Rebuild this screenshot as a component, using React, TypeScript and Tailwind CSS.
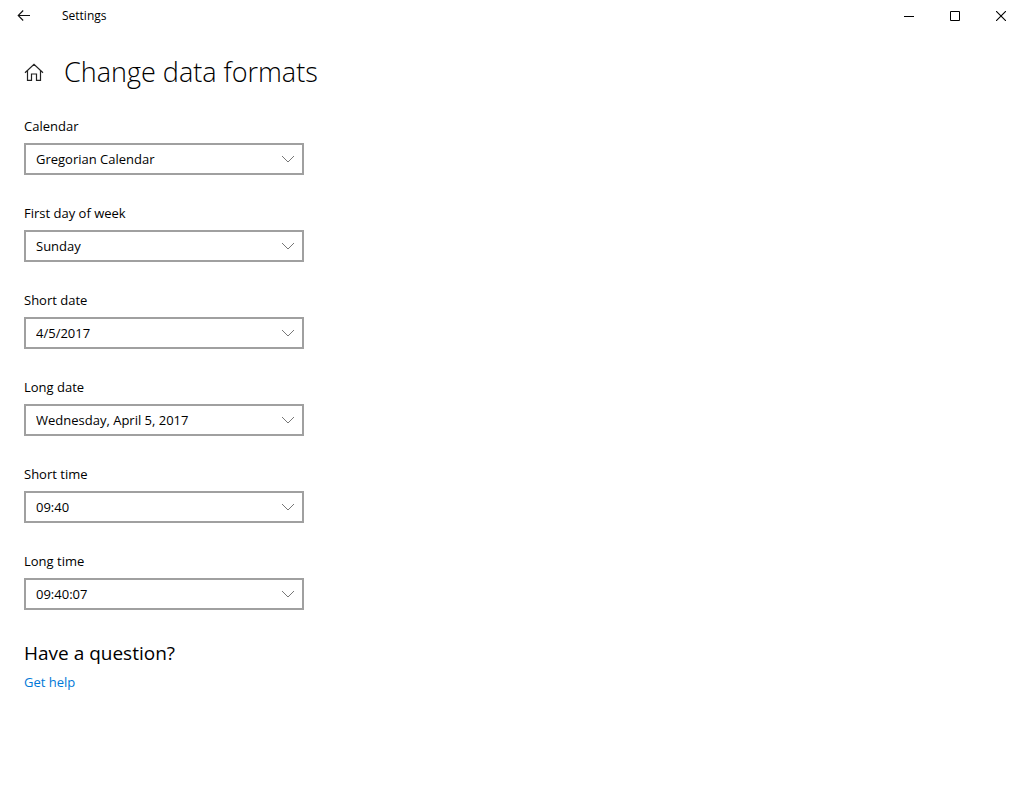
import { useState } from "react";

type Field = {
  id: string;
  label: string;
  options: string[];
};

const fields: Field[] = [
  { id: "calendar", label: "Calendar", options: ["Gregorian Calendar"] },
  {
    id: "first-day",
    label: "First day of week",
    options: ["Sunday", "Monday", "Tuesday", "Wednesday", "Thursday", "Friday", "Saturday"],
  },
  { id: "short-date", label: "Short date", options: ["4/5/2017", "04/05/2017", "2017-04-05"] },
  { id: "long-date", label: "Long date", options: ["Wednesday, April 5, 2017", "April 5, 2017"] },
  { id: "short-time", label: "Short time", options: ["09:40", "9:40 AM"] },
  { id: "long-time", label: "Long time", options: ["09:40:07", "9:40:07 AM"] },
];

function TitleBar() {
  return (
    <header className="flex h-8 items-center justify-between">
      <div className="flex h-full items-center">
        <button aria-label="Back" className="flex h-full w-12 items-center justify-center">
          <svg width="14" height="12" viewBox="0 0 14 12" fill="none" stroke="#111" strokeWidth="1.1">
            <path d="M13 5.500H1M6.200 .5L1.200 5.500l5 5" />
          </svg>
        </button>
        <span className="pl-3.5 text-[12px] leading-5">Settings</span>
      </div>

      <div className="flex h-full">
        <button aria-label="Minimize" className="flex h-full w-[46px] items-center justify-center hover:bg-gray-100">
          <svg width="10" height="10" viewBox="0 0 10 10" shapeRendering="crispEdges">
            <path d="M0 5h10v1H0z" fill="#000" />
          </svg>
        </button>
        <button aria-label="Maximize" className="flex h-full w-[46px] items-center justify-center hover:bg-gray-100">
          <svg width="10" height="10" viewBox="0 0 10 10" fill="none" stroke="#000">
            <path d="M.5 .5h9v9h-9z" />
          </svg>
        </button>
        <button aria-label="Close" className="flex h-full w-[46px] items-center justify-center hover:bg-red-600">
          <svg width="10" height="10" viewBox="0 0 10 10" fill="none" stroke="#000" strokeWidth="1.1">
            <path d="M0 0l10 10M10 0L0 10" />
          </svg>
        </button>
      </div>
    </header>
  );
}

function SelectField({ id, label, options }: Field) {
  const [value, setValue] = useState(options[0]);

  return (
    <div className="flex flex-col gap-[7px]">
      <label htmlFor={id} className="text-[13px] leading-5">
        {label}
      </label>
      <div className="grid">
        <select
          id={id}
          value={value}
          onChange={(e) => setValue(e.target.value)}
          className="col-start-1 row-start-1 h-8 w-full appearance-none border-2 border-[#a0a0a0] bg-white pr-8 pl-2.5 text-[13px] leading-5 outline-none focus:border-[#0078d7]"
        >
          {options.map((option) => (
            <option key={option}>{option}</option>
          ))}
        </select>
        <svg
          className="pointer-events-none col-start-1 row-start-1 mr-2.5 self-center justify-self-end"
          width="12"
          height="8"
          viewBox="0 0 12 8"
          fill="none"
          stroke="#777"
        >
          <path d="M0 1l6 6 6-6" />
        </svg>
      </div>
    </div>
  );
}

export default function App() {
  return (
    <div className="min-h-screen bg-white font-['Open_Sans','Noto_Sans',sans-serif] text-black">
      <TitleBar />

      <main className="px-6 pt-5">
        <div className="flex items-center gap-5">
          <button aria-label="Home">
            <svg width="20" height="20" viewBox="0 0 20 20" fill="none" stroke="#222" strokeWidth="1.2">
              <path d="M1 10.800L10 2.300l9 8.500M3.500 8.800V18.400h4V12h5v6.400h4V8.800" />
            </svg>
          </button>
          <h1 className="text-[27px] leading-10 font-light">Change data formats</h1>
        </div>

        <form className="mt-6 flex max-w-[280px] flex-col gap-7">
          {fields.map((field) => (
            <SelectField key={field.id} {...field} />
          ))}
        </form>

        <section className="mt-7">
          <h2 className="text-[19px] leading-[30px]">Have a question?</h2>
          <a href="#help" className="mt-1 inline-block text-[13px] leading-5 text-[#0078d7] hover:text-gray-500">
            Get help
          </a>
        </section>
      </main>
    </div>
  );
}
